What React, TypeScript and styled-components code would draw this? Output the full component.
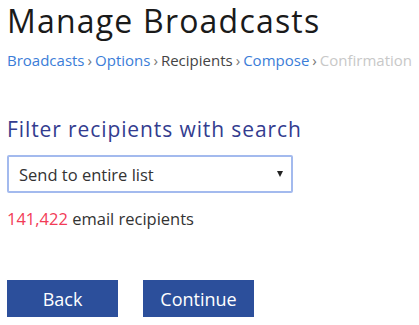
import React from 'react';
import styled, { createGlobalStyle } from 'styled-components';

const GlobalStyle = createGlobalStyle`
  body {
    margin: 0;
    background: #fff;
    font-family: "Open Sans", "Noto Sans", sans-serif;
  }
`;

const Page = styled.div`
  padding: 1px 7px 0;
`;

const Title = styled.h1`
  margin: 0;
  font-size: 32px;
  font-weight: 400;
  letter-spacing: 1.2px;
  line-height: 40px;
  color: #1a1a1a;
`;

const Crumbs = styled.nav`
  display: flex;
  align-items: center;
  margin-top: 9px;
  font-size: 15px;
  line-height: 20px;
  white-space: nowrap;
`;

const Crumb = styled.span<{ state: 'link' | 'current' | 'disabled' }>`
  color: ${(p) => (p.state === 'link' ? '#3b7dd8' : p.state === 'current' ? '#444' : '#c8c8c8')};
`;

const Sep = styled.span`
  color: #777;
  margin: 0 3px;
`;

const Heading = styled.h2`
  margin: 46px 0 0;
  font-size: 21px;
  font-weight: 400;
  letter-spacing: 0.9px;
  line-height: 26px;
  color: #333c8f;
`;

const SelectBox = styled.div`
  display: flex;
  align-items: center;
  justify-content: space-between;
  box-sizing: border-box;
  width: 286px;
  height: 38px;
  margin-top: 13px;
  padding: 0 8px 0 10px;
  border: 2px solid #a3baee;
  border-radius: 2px;
  font-size: 16.5px;
  color: #333;
`;

const Caret = styled.span`
  width: 0;
  height: 0;
  border-left: 3.5px solid transparent;
  border-right: 3.5px solid transparent;
  border-top: 6px solid #222;
`;

const Count = styled.p`
  margin: 16px 0 0;
  font-size: 16.5px;
  line-height: 20px;
  color: #333;
`;

const Num = styled.span`
  color: #f23b57;
`;

const Actions = styled.div`
  display: flex;
  gap: 25px;
  margin-top: 51px;
`;

const Button = styled.button`
  width: 111px;
  height: 37px;
  border: none;
  border-radius: 0;
  background: #2c4f9b;
  color: #fff;
  font-family: inherit;
  font-size: 18px;
  padding: 0;
`;

export default function App() {
  const steps: { label: string; state: 'link' | 'current' | 'disabled' }[] = [
    { label: 'Broadcasts', state: 'link' },
    { label: 'Options', state: 'link' },
    { label: 'Recipients', state: 'current' },
    { label: 'Compose', state: 'link' },
    { label: 'Confirmation', state: 'disabled' },
  ];
  return (
    <>
      <GlobalStyle />
      <Page>
        <Title>Manage Broadcasts</Title>
        <Crumbs>
          {steps.map((s, i) => (
            <React.Fragment key={s.label}>
              {i > 0 && <Sep>›</Sep>}
              <Crumb state={s.state}>{s.label}</Crumb>
            </React.Fragment>
          ))}
        </Crumbs>
        <Heading>Filter recipients with search</Heading>
        <SelectBox>
          <span>Send to entire list</span>
          <Caret />
        </SelectBox>
        <Count>
          <Num>141,422</Num> email recipients
        </Count>
        <Actions>
          <Button>Back</Button>
          <Button>Continue</Button>
        </Actions>
      </Page>
    </>
  );
}
